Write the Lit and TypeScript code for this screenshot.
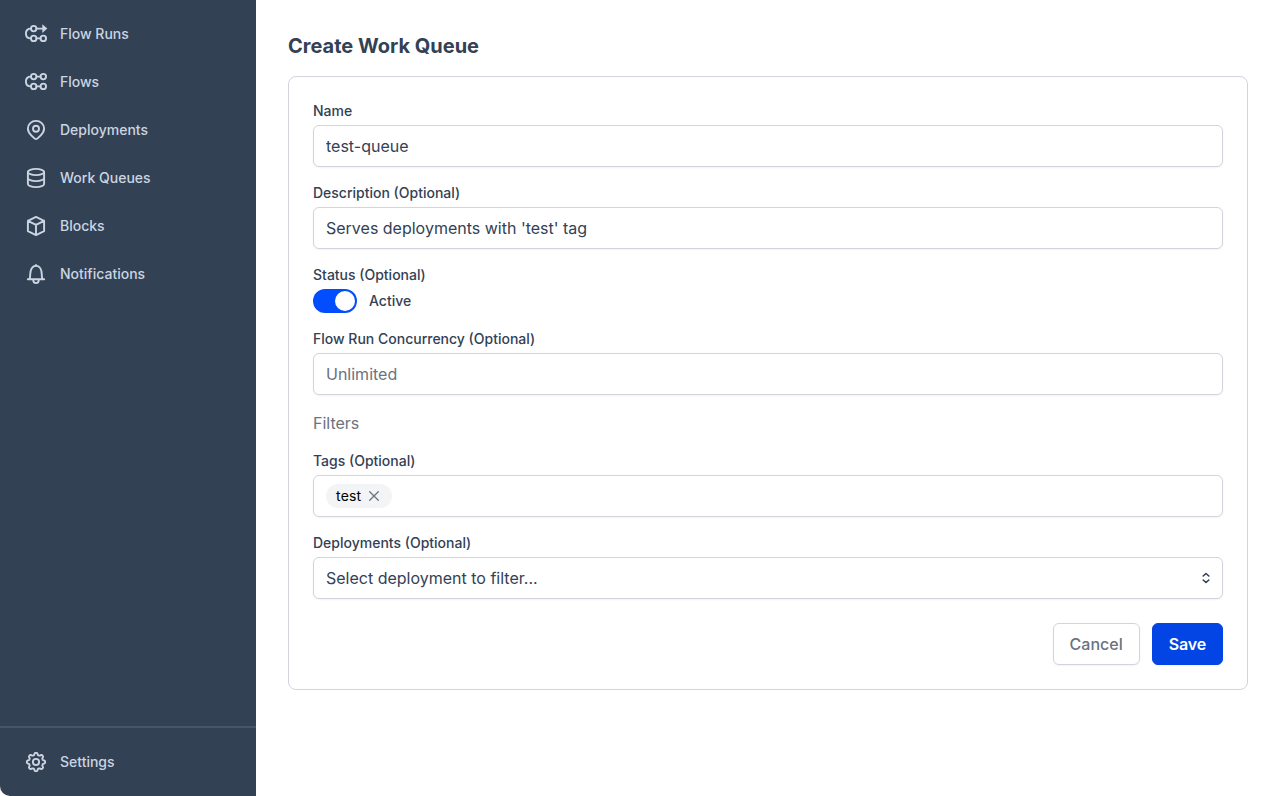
import { LitElement, html, css, svg } from "lit";
import { customElement, state } from "lit/decorators.js";

/** Outline of an eight-lobed cog centred in a 24px box. */
const cogOutline =
  "M" +
  Array.from({ length: 96 }, (_, i) => {
    const angle = (i / 96) * Math.PI * 2;
    const wave = Math.cos(8 * angle);
    const radius = 8.1 + 1.1 * Math.tanh(1.8 * wave);
    return `${(12 + radius * Math.cos(angle)).toFixed(2)} ${(12 + radius * Math.sin(angle)).toFixed(2)}`;
  }).join("L") +
  "Z";

const icons = {
  flowRuns: svg`<circle cx="9.7" cy="6.6" r="2.75"/><circle cx="9.7" cy="16.4" r="2.75"/><circle cx="19.3" cy="16.4" r="2.75"/><path d="M12.5 6.6H19M12.5 16.4h4M6.9 6.6C3.6 6.6 1.9 8.8 1.9 11.5s1.7 4.9 5 4.9"/><path class="solid" d="M18.3 2.2v8.8l5-4.4z"/>`,
  flows: svg`<circle cx="9.7" cy="6.6" r="2.75"/><circle cx="19.3" cy="6.6" r="2.75"/><circle cx="9.7" cy="16.4" r="2.75"/><circle cx="19.3" cy="16.4" r="2.75"/><path d="M12.5 6.6h4M12.5 16.4h4M6.9 6.6C3.6 6.6 1.9 8.8 1.9 11.5s1.7 4.9 5 4.9"/>`,
  pin: svg`<path d="M12 21.1c-1.2 0-8.1-5.5-8.1-10.7a8.1 7.5 0 0 1 16.2 0c0 5.2-6.9 10.7-8.1 10.7z"/><circle cx="12" cy="10.7" r="3"/>`,
  stack: svg`<ellipse cx="12" cy="6" rx="8.1" ry="3.1"/><path d="M3.9 6v12c0 1.7 3.6 3.1 8.1 3.1s8.1-1.4 8.1-3.1V6M3.9 12c0 1.7 3.6 3.1 8.1 3.1s8.1-1.4 8.1-3.1"/>`,
  cube: svg`<path d="M12 2.9l8.1 3.9v10.4l-8.1 3.9-8.1-3.9V6.8zM3.9 6.8l8.1 4 8.1-4M12 10.8v10.3"/>`,
  bell: svg`<path d="M3.8 17.2h16.4M5.5 17.2c.5-1 .7-2.200.7-4.400C6.200 7.500 8.400 3.800 12 3.800s5.800 3.700 5.800 9c0 2.200.2 3.400.7 4.400M12 2.900v.9M9.200 17.800c0 2 1.200 3.300 2.800 3.300s2.800-1.300 2.800-3.300"/>`,
  gear: svg`<path d=${cogOutline}/><circle cx="12" cy="12" r="3.1"/>`,
};

const navItems: Array<[keyof typeof icons, string]> = [
  ["flowRuns", "Flow Runs"],
  ["flows", "Flows"],
  ["pin", "Deployments"],
  ["stack", "Work Queues"],
  ["cube", "Blocks"],
  ["bell", "Notifications"],
];

@customElement("app-root")
export class AppRoot extends LitElement {
  @state() private active = true;

  static styles = css`
    :host {
      display: flex;
      height: 100vh;
      background: #fff;
      color: #334155;
      font-family: Inter, "Liberation Sans", sans-serif;
      font-size: 16px;
      line-height: 24px;
    }
    * { box-sizing: border-box; }
    .sidebar {
      display: flex;
      flex-direction: column;
      justify-content: space-between;
      flex: 0 0 256px;
      padding-top: 10px;
      background: #334155;
      border-bottom-left-radius: 10px;
    }
    .item {
      display: flex;
      align-items: center;
      gap: 12px;
      height: 48px;
      padding: 0 24px;
      color: #cbd5e1;
      font-size: 14px;
      font-weight: 500;
      text-decoration: none;
    }
    .icon {
      width: 24px;
      height: 24px;
      fill: none;
      stroke: currentColor;
      stroke-width: 1.9;
      stroke-linecap: round;
      stroke-linejoin: round;
    }
    .solid { fill: currentColor; stroke: none; }
    .bottom { border-top: 2px solid #475569; padding: 10px 0; }
    .main { flex: 1; padding: 32px; }
    h1 { margin: 0 0 16px; font-size: 20px; line-height: 28px; font-weight: 700; }
    .card {
      display: flex;
      flex-direction: column;
      gap: 16px;
      padding: 24px;
      border: 1px solid #d1d5db;
      border-radius: 8px;
    }
    .field { display: flex; flex-direction: column; gap: 4px; }
    .label { font-size: 14px; line-height: 20px; font-weight: 500; }
    .control {
      display: flex;
      align-items: center;
      width: 100%;
      height: 42px;
      margin: 0;
      padding: 0 12px;
      border: 1px solid #d1d5db;
      border-radius: 6px;
      background: #fff;
      box-shadow: 0 1px 2px rgba(0, 0, 0, 0.05);
      color: #334155;
      font: inherit;
      outline: none;
    }
    .control::placeholder { color: #6b7280; opacity: 1; }
    .select { justify-content: space-between; padding-right: 6px; }
    .chevrons {
      width: 20px;
      height: 20px;
      fill: none;
      stroke: #334155;
      stroke-width: 1.6;
      stroke-linecap: round;
      stroke-linejoin: round;
    }
    .status { display: flex; align-items: center; gap: 12px; height: 24px; }
    .toggle {
      display: flex;
      justify-content: flex-start;
      width: 44px;
      height: 24px;
      padding: 2px;
      border: 0;
      border-radius: 12px;
      background: #d1d5db;
    }
    .toggle.on { justify-content: flex-end; background: #024dfd; }
    .knob { width: 20px; height: 20px; border-radius: 50%; background: #fff; }
    .filters { color: #6b7280; }
    .tag {
      display: flex;
      align-items: center;
      justify-content: space-between;
      width: 66px;
      height: 24px;
      padding: 0 10px;
      border-radius: 12px;
      background: #f3f4f6;
      color: #000;
      font-size: 14px;
      letter-spacing: 0.2px;
    }
    .close {
      flex: none;
      width: 16px;
      height: 16px;
      fill: none;
      stroke: #6b7280;
      stroke-width: 1.3;
      stroke-linecap: round;
    }
    .actions { display: flex; justify-content: flex-end; gap: 12px; margin-top: 8px; }
    .button {
      height: 42px;
      padding: 0 16px;
      border: 1px solid #d1d5db;
      border-radius: 6px;
      background: #fff;
      box-shadow: 0 1px 2px rgba(0, 0, 0, 0.05);
      color: #6b7280;
      font: inherit;
      font-weight: 500;
    }
    .primary {
      border-color: #0245e4;
      background: #0245e4;
      color: #fff;
      font-weight: 600;
      letter-spacing: -0.15px;
    }
  `;

  private navItem(icon: keyof typeof icons, text: string) {
    return html`<a class="item"><svg class="icon" viewBox="0 0 24 24">${icons[icon]}</svg><span>${text}</span></a>`;
  }

  render() {
    return html`
      <nav class="sidebar">
        <div>${navItems.map(([icon, text]) => this.navItem(icon, text))}</div>
        <div class="bottom">${this.navItem("gear", "Settings")}</div>
      </nav>
      <main class="main">
        <h1>Create Work Queue</h1>
        <div class="card">
          <div class="field"><label class="label">Name</label><input class="control" .value=${"test-queue"} /></div>
          <div class="field"><label class="label">Description (Optional)</label><input class="control" .value=${"Serves deployments with 'test' tag"} /></div>
          <div class="field">
            <label class="label">Status (Optional)</label>
            <div class="status">
              <button class="toggle ${this.active ? "on" : ""}" @click=${() => (this.active = !this.active)}><span class="knob"></span></button>
              <span class="label">${this.active ? "Active" : "Paused"}</span>
            </div>
          </div>
          <div class="field"><label class="label">Flow Run Concurrency (Optional)</label><input class="control" placeholder="Unlimited" /></div>
          <div class="filters">Filters</div>
          <div class="field">
            <label class="label">Tags (Optional)</label>
            <div class="control"><span class="tag">test<svg class="close" viewBox="0 0 16 16"><path d="M3.7 3.7l8.6 8.6M12.3 3.7l-8.6 8.6"/></svg></span></div>
          </div>
          <div class="field">
            <label class="label">Deployments (Optional)</label>
            <div class="control select"><span>Select deployment to filter...</span><svg class="chevrons" viewBox="0 0 20 20"><path d="M7.2 8L10 5.5 12.8 8M7.2 12l2.8 2.5 2.8-2.5"/></svg></div>
          </div>
          <div class="actions"><button class="button">Cancel</button><button class="button primary">Save</button></div>
        </div>
      </main>
    `;
  }
}
